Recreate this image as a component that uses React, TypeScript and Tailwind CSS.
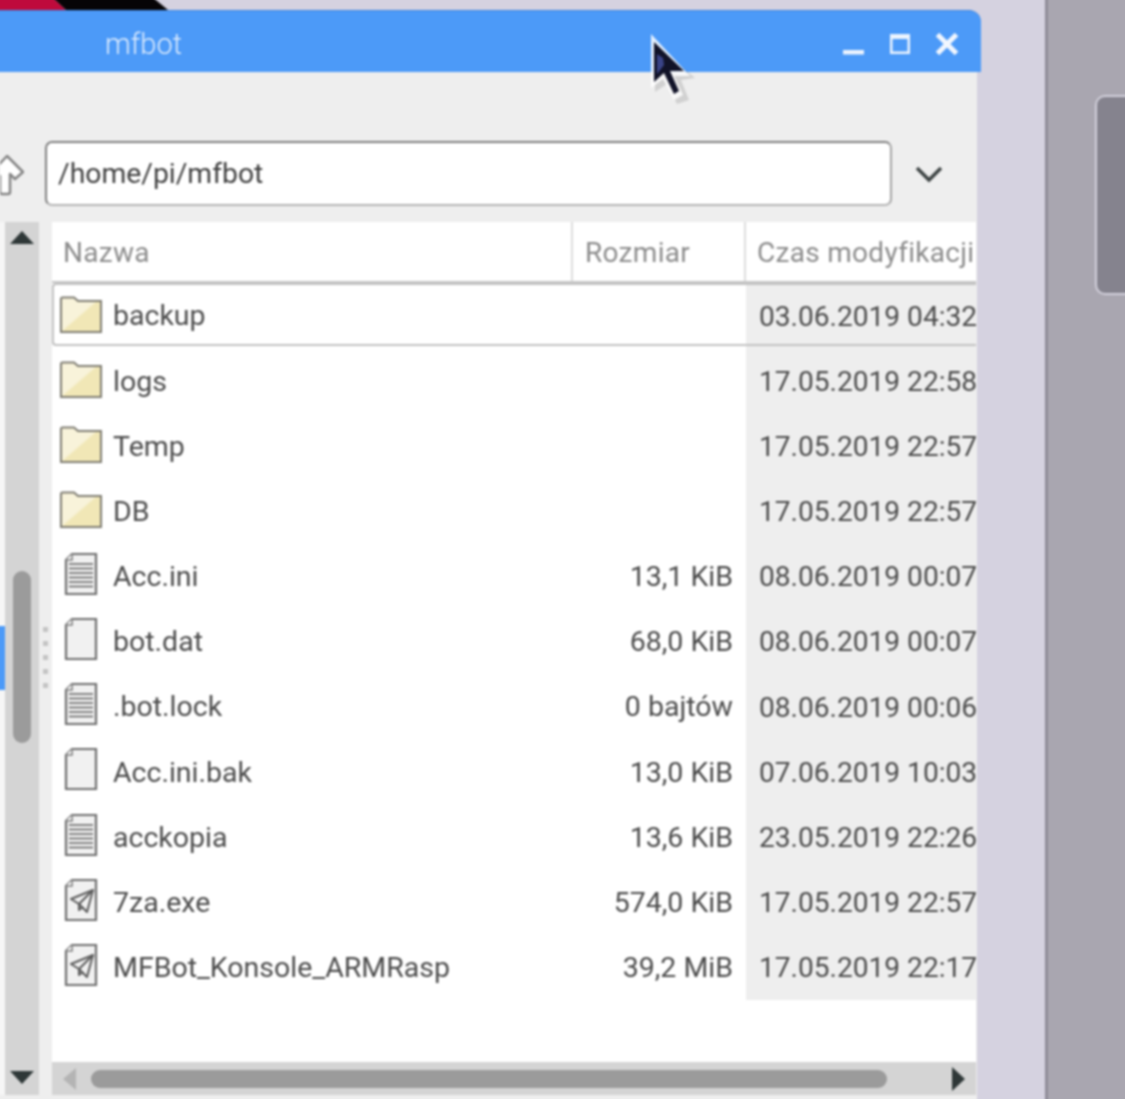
import React from "react";

type Kind = "folder" | "text" | "blank" | "exe";
const rows: { kind: Kind; name: string; size: string; date: string }[] = [
  { kind: "folder", name: "backup", size: "", date: "03.06.2019 04:32" },
  { kind: "folder", name: "logs", size: "", date: "17.05.2019 22:58" },
  { kind: "folder", name: "Temp", size: "", date: "17.05.2019 22:57" },
  { kind: "folder", name: "DB", size: "", date: "17.05.2019 22:57" },
  { kind: "text", name: "Acc.ini", size: "13,1 KiB", date: "08.06.2019 00:07" },
  { kind: "blank", name: "bot.dat", size: "68,0 KiB", date: "08.06.2019 00:07" },
  { kind: "text", name: ".bot.lock", size: "0 bajtów", date: "08.06.2019 00:06" },
  { kind: "blank", name: "Acc.ini.bak", size: "13,0 KiB", date: "07.06.2019 10:03" },
  { kind: "text", name: "acckopia", size: "13,6 KiB", date: "23.05.2019 22:26" },
  { kind: "exe", name: "7za.exe", size: "574,0 KiB", date: "17.05.2019 22:57" },
  { kind: "exe", name: "MFBot_Konsole_ARMRasp", size: "39,2 MiB", date: "17.05.2019 22:17" },
];

function Icon({ kind }: { kind: Kind }) {
  if (kind === "folder") {
    return (
      <svg width="44" height="38" viewBox="0 0 44 38" className="-mt-[2px] shrink-0">
        <defs>
          <linearGradient id="fold" x1="0" y1="0" x2="1" y2="1">
            <stop offset="0.48" stopColor="#f8f3da" />
            <stop offset="0.52" stopColor="#f1e7b6" />
          </linearGradient>
        </defs>
        <path d="M2 36 V3 Q2 1.500 3.500 1.500 H15 L19 5 H42 V36 Z" fill="url(#fold)" stroke="#7f7d73" strokeWidth="2" />
      </svg>
    );
  }
  return (
    <svg width="34" height="44" viewBox="0 0 34 44" className="-mt-[5px] shrink-0">
      <path d="M8 2 H32 V42 H2 V8 Z" fill="#f1f1f1" stroke="#6e6e6e" strokeWidth="2.200" />
      <path d="M8 2 V8 H2" fill="#fff" stroke="#808080" strokeWidth="1.600" />
      {kind === "text" && (
        <path d="M5 12 H29 M5 16.500 H29 M5 21 H29 M5 25.500 H29 M5 30 H29 M5 34.500 H29" stroke="#5c5c5c" strokeWidth="1.700" />
      )}
      {kind === "exe" && (
        <g fill="none" stroke="#5c5c5c" strokeWidth="2" strokeLinejoin="round">
          <path d="M29 12 L7 21 L15 26 L23 34 Z" />
          <path d="M29 12 L15 26 V32 L19 29" />
        </g>
      )}
    </svg>
  );
}

export default function App() {
  return (
    <div className="h-[1099px] w-[1125px] overflow-hidden">
      <div className="-ml-[4px] -mt-[4px] flex h-[1107px] w-[1133px] bg-[#d5d2e0] font-['Roboto',sans-serif] text-[#4c4c4c] blur-[1px]">
        <div className="relative flex w-[985px] shrink-0 flex-col">
          <div className="h-[14px] shrink-0">
            <svg width="174" height="14" viewBox="0 0 174 14" className="block">
              <path d="M0 0 H55 L70 14 H0 Z" fill="#bf0a3c" />
              <path d="M55 0 H155 L172 14 H70 Z" fill="#060406" />
            </svg>
          </div>

          <div className="flex h-[62px] shrink-0 items-center justify-between rounded-tr-[12px] border-t border-[#4186dc] bg-[#4c9af8] pl-[109px] pr-[22px] pt-[6px]">
            <span className="text-[29px] font-light leading-none text-[#dcebfd]">mfbot</span>
            <div className="-mt-[2px] flex items-center gap-[23px]">
              <svg width="24" height="24" viewBox="0 0 24 24"><rect x="2" y="18" width="21" height="4.500" fill="#ecf4fe" /></svg>
              <svg width="24" height="24" viewBox="0 0 24 24"><path d="M2 2 H22 V22 H2 Z M4.500 7 V19.500 H19.500 V7 Z" fill="#ecf4fe" fillRule="evenodd" /></svg>
              <svg width="24" height="24" viewBox="0 0 24 24"><path d="M2.500 2.500 L21.500 21.500 M21.500 2.500 L2.500 21.500" stroke="#f2f7fe" strokeWidth="5" /></svg>
            </div>
          </div>

          <div className="flex w-[981px] flex-1 flex-col overflow-hidden bg-[#eeeeee]">
            <div className="flex h-[150px] shrink-0 items-start pl-[4px] pt-[69px]">
              <svg width="24" height="44" viewBox="0 0 24 44" className="mt-[13px] shrink-0">
                <path d="M7 2 L23 18 L15 25 L10 20 V38 Q10 40 8 40 H2 Q0 40 0 38 V22 L-8 18 Z" fill="#ffffff" stroke="#858585" strokeWidth="2.500" strokeLinejoin="round" />
              </svg>
              <div className="ml-[21px] flex h-[65px] w-[847px] shrink-0 items-center rounded-[7px] border-2 border-[#7f7f7f] border-b-[#b5b5b5] border-r-[#a5a5a5] bg-white pl-[11px] pt-[2px] text-[28.300px] font-normal leading-none text-[#404040]">
                /home/pi/mfbot
              </div>
              <svg width="28" height="20" viewBox="0 0 28 20" className="ml-[23px] mt-[23px] shrink-0">
                <path d="M2 4 L14 16 L26 4" fill="none" stroke="#3e4444" strokeWidth="3.500" />
              </svg>
            </div>

            <div className="flex h-[873px] shrink-0">
              <div className="w-[9px] shrink-0 bg-[#f6f6f6] pt-[404px]">
                <div className="h-[64px] bg-[#4c9af8]" />
              </div>
              <div className="flex w-[34px] shrink-0 flex-col items-center bg-[#d4d4d4] pt-[8px]">
                <svg width="26" height="14" viewBox="0 0 26 14" className="shrink-0"><path d="M13 1 L25 14 H1 Z" fill="#2f3838" /></svg>
                <div className="mt-[327px] h-[172px] w-[18px] rounded-[9px] bg-[#9b9b9b]" />
                <svg width="26" height="14" viewBox="0 0 26 14" className="mt-[328px] shrink-0"><path d="M13 13 L25 0 H1 Z" fill="#2f3838" /></svg>
              </div>
              <div className="flex w-[13px] shrink-0 flex-col items-center gap-[9px] pt-[405px]">
                {[0, 1, 2, 3, 4].map((i) => (
                  <div key={i} className="h-[5px] w-[5px] bg-[#c4c4c4]" />
                ))}
              </div>

              <div className="flex w-[924px] shrink-0 flex-col bg-white">
                <div className="flex h-[61px] shrink-0 border-b-2 border-[#c6c6c6] text-[28px] font-normal leading-none tracking-[0.3px] text-[#8c8c8c]">
                  <div className="flex w-[519px] items-center pl-[11px] pt-[3px]">Nazwa</div>
                  <div className="flex w-[173px] items-center border-l-2 border-[#dddddd] pl-[12px] pt-[3px]">Rozmiar</div>
                  <div className="flex flex-1 items-center overflow-hidden whitespace-nowrap border-l-2 border-[#dddddd] pl-[11px] pt-[3px]">Czas modyfikacji</div>
                </div>

                <div className="flex flex-col text-[28.500px] font-normal leading-none">
                  {rows.map((r, i) => (
                    <div key={r.name} className="relative flex h-[65.200px] shrink-0">
                      <div className="flex w-[694px] items-center">
                        <div className="flex w-[60px] shrink-0 justify-center pr-[2px]">
                          <Icon kind={r.kind} />
                        </div>
                        <span className="ml-[1px] whitespace-nowrap pt-[2px]">{r.name}</span>
                        <span className="ml-auto whitespace-nowrap pr-[13px] pt-[2px]">{r.size}</span>
                      </div>
                      <div className="flex flex-1 items-center overflow-hidden whitespace-nowrap bg-[#eeeeee] pl-[13px] pt-[2px] text-[28.100px]">{r.date}</div>
                      {i === 0 && (
                        <div className="absolute inset-x-0 bottom-[2px] top-0 rounded-l-[4px] border-2 border-r-0 border-[#c2c2c2]" />
                      )}
                    </div>
                  ))}
                </div>

                <div className="flex-1" />

                <div className="flex h-[33px] shrink-0 items-center bg-[#d4d4d4]">
                  <svg width="16" height="24" viewBox="0 0 16 24" className="ml-[10px] shrink-0"><path d="M14 1 V23 L1 12 Z" fill="#b4b4b4" /></svg>
                  <div className="ml-[13px] h-[18px] w-[796px] rounded-[9px] bg-[#9b9b9b]" />
                  <svg width="16" height="24" viewBox="0 0 16 24" className="ml-[63px] shrink-0"><path d="M2 0 V24 L15 12 Z" fill="#2f3838" /></svg>
                </div>
              </div>
            </div>
          </div>

          <svg width="50" height="76" viewBox="0 0 50 76" className="absolute left-[651px] top-[36px]">
            <path d="M8 12 V60 L20 52 L30 72 L42 68 L34 48 L48 46 Z" fill="#000000" opacity="0.12" />
            <path d="M4 2 V56 L16 47 L27 68 L36 63 L27 44 H43 Z" fill="#ffffff" opacity="0.85" />
            <path d="M7 10 V50 L17 41 L27 62 L32 59 L23 39 H37 Z" fill="#111328" />
            <path d="M10 22 V42 L17 33 L16 26 Z" fill="#3a4488" />
          </svg>
        </div>

        <div className="w-[64px] shrink-0" />
        <div className="w-[3px] shrink-0 bg-[#8f8c98]" />
        <div className="flex-1 bg-[#a9a6b0] pl-[47px] pt-[99px]">
          <div className="h-[200px] w-[40px] rounded-l-[10px] border-2 border-r-0 border-[#d3d1dc] bg-[#85838e]" />
        </div>
      </div>
    </div>
  );
}
